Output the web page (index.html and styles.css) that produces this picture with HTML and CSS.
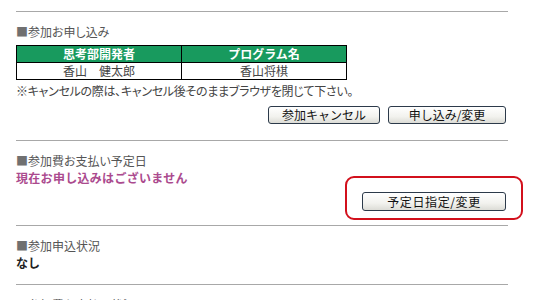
FILE: index.html
```html
<!DOCTYPE html>
<html lang="ja">

<head>
    <meta charset="UTF-8">
    <title>参加申込</title>
    <link rel="stylesheet" href="styles.css">
</head>

<body>
    <div class="page">
        <div class="section">
            <p class="heading"><span class="mark">■</span>参加お申し込み</p>
            <table class="entry">
                <tr>
                    <th>思考部開発者</th>
                    <th>プログラム名</th>
                </tr>
                <tr>
                    <td>香山　健太郎</td>
                    <td>香山将棋</td>
                </tr>
            </table>
            <p class="note">※キャンセルの際は、キャンセル後そのままブラウザを閉じて下さい。</p>
            <div class="actions">
                <button class="btn btn--cancel">参加キャンセル</button>
                <button class="btn btn--apply">申し込み/変更</button>
            </div>
        </div>

        <div class="section">
            <p class="heading"><span class="mark">■</span>参加費お支払い予定日</p>
            <p class="notice">現在お申し込みはございません</p>
            <div class="pay-actions">
                <div class="highlight">
                    <button class="btn btn--date">予定日指定/変更</button>
                </div>
            </div>
        </div>

        <div class="section section--status">
            <p class="heading"><span class="mark">■</span>参加申込状況</p>
            <p class="value">なし</p>
        </div>

        <div class="section">
            <p class="heading"><span class="mark">■</span>参加費お支払い状況</p>
        </div>
    </div>
</body>

</html>
```

FILE: styles.css
```css
* {
    box-sizing: border-box;
    padding: 0px;
    margin: 0px;
}

body {
    background-color: #ffffff;
    font-family: "Noto Sans CJK JP", "DejaVu Sans", sans-serif;
    font-size: 12px;
    color: #444444;
    padding-top: 11px;
}

.page {
    width: 492px;
    margin-left: 16px;
}

.section {
    border-top: 1px solid #a8a8a8;
    padding-top: 12px;
}

.heading {
    line-height: 16px;
    color: #555555;
    font-feature-settings: "palt";
}

.heading .mark {
    color: #707070;
}

/* entry table */
.entry {
    margin-top: 5px;
    width: 331px;
    border-collapse: collapse;
    border: 1px solid #000000;
}

.entry th,
.entry td {
    border: 1px solid #000000;
    text-align: center;
    width: 50%;
    line-height: 16px;
}

.entry th {
    background-color: #189a5e;
    color: #ffffff;
    font-weight: bold;
    height: 16px;
}

.entry td {
    height: 17px;
    color: #444444;
}

.note {
    margin-top: 3px;
    line-height: 16px;
    letter-spacing: -0.3px;
    font-feature-settings: "palt";
}

.actions {
    margin-top: 7px;
    margin-bottom: 16px;
    display: flex;
    justify-content: flex-end;
    gap: 8px;
    padding-right: 2px;
}

.btn {
    height: 18px;
    font-family: "Noto Sans CJK JP", "DejaVu Sans", sans-serif;
    font-size: 12px;
    line-height: 14px;
    color: #111111;
    background: linear-gradient(#ffffff, #f2f2ee 60%, #dcdcd6);
    border: 1px solid #2c3a4a;
    border-radius: 3px;
    cursor: pointer;
}

.btn--cancel {
    width: 112px;
}

.btn--apply {
    width: 118px;
}

.btn--date {
    width: 144px;
    height: 19px;
    letter-spacing: 0.6px;
}

/* payment */
.notice {
    line-height: 16px;
    margin-top: 1px;
    color: #ab4a8e;
    font-weight: bold;
    letter-spacing: 0.3px;
}

.pay-actions {
    display: flex;
    justify-content: flex-end;
    margin-top: -10px;
    margin-right: -15px;
    margin-bottom: 5px;
}

.highlight {
    width: 178px;
    border: 2px solid #d2101c;
    border-radius: 9px;
    padding: 14px 15px 7px 15px;
}

/* status */
.section--status {
    padding-bottom: 13px;
}

.value {
    line-height: 16px;
    margin-top: 1px;
    font-weight: bold;
    color: #222222;
}
```
